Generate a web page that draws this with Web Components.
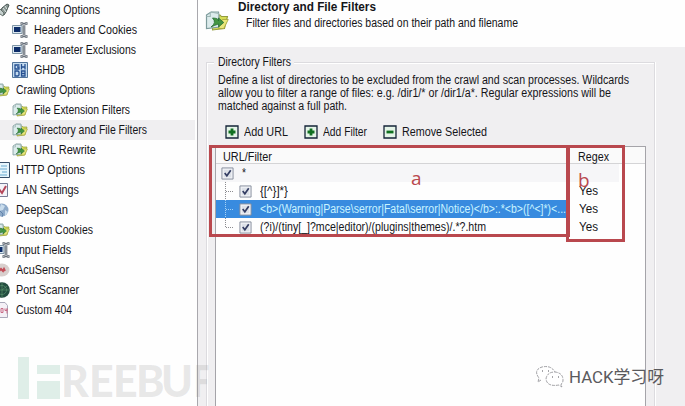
<!DOCTYPE html>
<html lang="en"><head><meta charset="utf-8"><title>Directory and File Filters</title>
<style>html,body{margin:0;width:685px;height:406px;overflow:hidden;background:#fff}</style></head>
<body><scan-settings></scan-settings>
<script>
const define=(name,html,setup)=>{
  const t=document.createElement('template');t.innerHTML=html;
  customElements.define(name,class extends HTMLElement{
    connectedCallback(){
      if(this.shadowRoot)return;
      this.attachShadow({mode:'open'}).append(t.content.cloneNode(true));
      if(setup)setup(this,this.shadowRoot);
    }
  });
};

// A single line of text, condensed horizontally to the width in "w".
define('fit-text','<style>:host{display:block;white-space:pre;height:1.2em;line-height:1.2;flex:none}span{display:inline-block;transform-origin:0 50%}</style><span><slot></slot></span>',(h,r)=>{
  const w=+h.getAttribute('w'),s=r.querySelector('span');
  h.style.width=w+'px';
  s.style.transform='scaleX('+w/s.getBoundingClientRect().width+')';
});

const icons={
  torch:'<path d="M8 6l5-4 2 1-3 7-2 3-4-3z" fill="#8b9794" stroke="#485653"/><path d="M9 6l3 4M11 4l2 3" stroke="#dce6e3"/><path d="M5 6l5 5-1 3-6-4z" fill="#c6d1cf" stroke="#66736f"/>',
  field:'<path d="M0.500 3.500h9.500v8H0.500z" fill="#dce8f0" stroke="#7f95a6"/><path d="M2 5h6.500v5H2z" fill="#0c2c68"/><path d="M8.500 1.500h1.500l2 1 2-1h1.500M8.500 14.500h1.500l2-1 2 1h1.500M12 2v12" fill="none" stroke="#58606b" stroke-width="2.600"/><path d="M12 2v12M9 1.500l3 1 3-1M9 14.500l3-1 3 1" fill="none" stroke="#b9bec3"/>',
  ghdb:'<path d="M.5.5h15v15H.5z" fill="#c5dcef" stroke="#51749b"/><path d="M7.500 3H3v4h4V5H5M9.500 2v5.500M13 2v5.500M9.500 5H13M3 9h3l1 1v3l-1 1H3zM9.500 9h3.500v5H9.500zM9.500 11.500H13" fill="none" stroke="#254f91" stroke-width="1.300"/>',
  folder:'<path d="M5 6l2-2h3l1 1h4l-2 8-8 1z" fill="#d6dc55" stroke="#929b3e" stroke-width=".7"/><path d="M1 4l3-2h5l1 10-9 1z" fill="#dcebec" stroke="#7d9b9c" stroke-width=".8"/><path d="M3.500 2v3H1M4 2l5 1v4" fill="none" stroke="#9db6b4" stroke-width=".7"/><path d="M9 13l2.500-6H15.500l-3 6z" fill="#e8e77b" stroke="#a9a83e" stroke-width=".6"/><path d="M5 6q4 0 4 2V6l3.500 3L9 12v-2Q6 11 4 12q4-3 1-6z" fill="#439543" stroke="#246b32" stroke-width=".5"/>',
  http:'<path d="M2 .5h13.500v15H2z" fill="#e6f5fc" stroke="#38506b"/><path d="M7 4h6M5 7h8M8 10h5M5 13h8" stroke="#69a9cf"/>',
  lan:'<path d="M2 1.500h11.500v13H2z" fill="#f4f3f8" stroke="#777c96"/><path d="M5 7l3 4 4-7" fill="none" stroke="#b54659" stroke-width="2"/>',
  deep:'<circle cx="8" cy="8" r="6.500" fill="#8eaac9"/><path d="M7 2l4 2-2 4-4 1zM11 8l3 2-3 4z" fill="#c9dcec"/><path d="M6 9l3 3-1 3" fill="none" stroke="#6183aa"/>',
  sensor:'<ellipse cx="8" cy="8" rx="7.500" ry="6.500" fill="#d8cfcd"/><path d="M5 9l2-2 2 2 1-2 1 2" fill="none" stroke="#c24c57" stroke-width="2"/>',
  port:'<circle cx="8" cy="8" r="7.800" fill="#244d40"/><circle cx="8" cy="8" r="4.500" fill="none" stroke="#4a8063"/><path d="M8 1v14M1 8h14M8 8l5-4" stroke="#59906b" stroke-width=".7"/>',
  custom:'<path d="M2 .5h9l2.500 3v12H2z" fill="#f4f0f6" stroke="#aaa9ba"/><path d="M7 6.500v4h2v-4zM11 6.500v2h2v-2M13 6.500v5" fill="none" stroke="#c86a85"/>',
  add:'<path d="M1 1h12v12H1z" fill="#e5f4e8" stroke="#152438" stroke-width="1.300"/><path d="M7 3.500v7M3.500 7h7" stroke="#107020" stroke-width="2.800"/>',
  remove:'<path d="M1 1h12v12H1z" fill="#e5f4e8" stroke="#152438" stroke-width="1.300"/><path d="M3.500 7h7" stroke="#107020" stroke-width="2.800"/>',
  check:'<path d="M1 1h12v12H1z" fill="#f0f2f6" stroke="#848b9a"/><path d="M3 3h8v8H3z" fill="#dde1e8"/><path d="M4 6.500l2.300 3L10.500 3.500" fill="none" stroke="#343d63" stroke-width="1.800"/>'
};
define('ui-icon','<style>:host{display:block;width:16px;height:16px;flex:none}svg{display:block;width:100%;height:100%}</style><svg></svg>',(h,r)=>{
  const n=h.getAttribute('name'),s=r.querySelector('svg');
  s.setAttribute('viewBox',/add|remove|check/.test(n)?'0 0 14 14':'0 0 16 16');s.innerHTML=icons[n];
});

define('nav-item','<style>:host{display:flex;height:20px;align-items:center;margin-left:-6px}:host([sub]){margin-left:0;padding-left:12px}:host([selected]){background:#f0eff1;margin-right:2px}fit-text{margin-left:6px}</style>',(h,r)=>{
  const i=document.createElement('ui-icon');i.setAttribute('name',h.getAttribute('icon'));
  const t=document.createElement('fit-text');t.setAttribute('w',h.getAttribute('w'));t.textContent=h.getAttribute('label');
  r.append(i,t);
});

define('nav-tree',`<style>:host{display:block;width:198px;box-sizing:border-box;background:#fefefe;border-right:1px solid #a9a8ad}</style>
<nav-item icon="torch" label="Scanning Options" w="84"></nav-item>
<nav-item sub icon="field" label="Headers and Cookies" w="103"></nav-item>
<nav-item sub icon="field" label="Parameter Exclusions" w="102"></nav-item>
<nav-item sub icon="ghdb" label="GHDB" w="31"></nav-item>
<nav-item icon="folder" label="Crawling Options" w="79"></nav-item>
<nav-item sub icon="folder" label="File Extension Filters" w="96"></nav-item>
<nav-item sub selected icon="folder" label="Directory and File Filters" w="113"></nav-item>
<nav-item sub icon="folder" label="URL Rewrite" w="62"></nav-item>
<nav-item icon="http" label="HTTP Options" w="69"></nav-item>
<nav-item icon="lan" label="LAN Settings" w="63"></nav-item>
<nav-item icon="deep" label="DeepScan" w="52"></nav-item>
<nav-item icon="folder" label="Custom Cookies" w="77"></nav-item>
<nav-item icon="field" label="Input Fields" w="55"></nav-item>
<nav-item icon="sensor" label="AcuSensor" w="53"></nav-item>
<nav-item icon="port" label="Port Scanner" w="63"></nav-item>
<nav-item icon="custom" label="Custom 404" w="56"></nav-item>`);

define('page-header',`<style>:host{display:flex;flex:none;height:47px;background:#fefefe;padding-left:7px;box-sizing:border-box}ui-icon{width:24px;height:24px;margin-top:9px}.t{padding-left:9px}.t fit-text:first-child{font-weight:bold}.t fit-text+fit-text{margin:2px 0 0 8px}</style>
<ui-icon name="folder"></ui-icon><div class="t"><fit-text w="138">Directory and File Filters</fit-text><fit-text w="272">Filter files and directories based on their path and filename</fit-text></div>`);

define('tool-bar',`<style>:host{display:flex;align-items:center;height:16px}ui-icon{width:14px;height:14px;margin-right:5px}</style>
<ui-icon name="add"></ui-icon><fit-text w="44" style="margin-right:16px">Add URL</fit-text><ui-icon name="add"></ui-icon><fit-text w="44" style="margin-right:16px">Add Filter</fit-text><ui-icon name="remove"></ui-icon><fit-text w="85">Remove Selected</fit-text>`);

define('filter-row',`<style>:host{display:grid;grid-template-columns:351px 1fr;height:18px}:host([root]){background:#f6f6f8;margin-right:26px}.c{display:flex;align-items:center;padding-left:5px;gap:8px;overflow:hidden}:host(:not([root])) .c{padding-left:0}:host([selected]) .c{background:#388bdf;color:#c8f3ff}.tree{width:17px;height:18px;flex:none;margin-right:-2px}:host([root]) .tree{display:none}ui-icon{width:13px;height:13px}.r{display:flex;align-items:center;padding-left:12px}
svg{display:block}path{fill:none;stroke:#8c8c90;stroke-dasharray:1 1}:host([selected]) path{stroke:#a5d2f5}</style>
<div class="c"><div class="tree"><svg width="18" height="18"><path d="M9.500 0V18M10 9.500H18"/></svg></div><ui-icon name="check"></ui-icon><slot></slot></div><div class="r"><slot name="regex"></slot></div>`,(h,r)=>{
  if(h.hasAttribute('last'))r.querySelector('path').setAttribute('d','M9.500 0V9M10 9.500H18');
});

define('filter-list',`<style>:host{display:block;height:261px;background:#fefefe;border:1px solid #a5a4a9;border-bottom:0;box-sizing:border-box}.h{display:grid;grid-template-columns:351px 1fr;height:17px;box-sizing:border-box;padding-top:3px;border-bottom:1px solid #d4d4d6;background:#fafafa}.h fit-text:first-child{margin-left:7px}.h fit-text+fit-text{margin-left:11px}</style>
<div class="h"><fit-text w="49">URL/Filter</fit-text><fit-text w="31">Regex</fit-text></div>
<filter-row root><fit-text w="4">*</fit-text></filter-row>
<filter-row><fit-text w="28">{[^}]*}</fit-text><fit-text slot="regex" w="19">Yes</fit-text></filter-row>
<filter-row selected><fit-text w="306">&lt;b&gt;(Warning|Parse\\serror|Fatal\\serror|Notice)&lt;/b&gt;:.*&lt;b&gt;([^&lt;]*)&lt;...</fit-text><fit-text slot="regex" w="19">Yes</fit-text></filter-row>
<filter-row last><fit-text w="226">(?i)/(tiny[_]?mce|editor)/(plugins|themes)/.*?.htm</fit-text><fit-text slot="regex" w="19">Yes</fit-text></filter-row>`);

define('group-box',`<style>:host{display:block;flex:1;min-height:0;margin:15px 30px 0 8px;border:1px solid #dcdbdf;border-bottom:0;box-shadow:inset 1px 1px #fff,1px 0 #fff;box-sizing:border-box;padding:0 8px 0 8px}.legend{display:flex;width:80px;height:14px;margin:-8px 0 0 -1px;padding-left:4px;box-sizing:border-box;background:#f0eff1}.p{padding:5px 0 0 3px}.p fit-text{height:13px;line-height:13px}tool-bar{margin:11px 0 6px 10px}</style>
<div class="legend"><fit-text w="73">Directory Filters</fit-text></div>
<div class="p"><fit-text w="411">Define a list of directories to be excluded from the crawl and scan processes. Wildcards</fit-text><fit-text w="393">allow you to filter a range of files: e.g. /dir1/* or /dir1/a*. Regular expressions will be</fit-text><fit-text w="129">matched against a full path.</fit-text></div>
<tool-bar></tool-bar><filter-list></filter-list>`);

define('note-layer',`<style>:host{position:absolute;inset:0;pointer-events:none}.box{position:absolute;border:3px solid #b9484e;box-sizing:border-box}.a{left:209px;top:145px;width:361px;height:92px}.b{left:566px;top:145px;width:59px;height:97px}.l{position:absolute;color:#b9484e;font:19px/20px "Open Sans",sans-serif}.w{position:absolute;left:18px;top:357px;overflow:visible}.chat{position:absolute;left:534px;top:364px}.name{position:absolute;left:569px;top:366px;font:17px/22px Roboto,"Noto Sans CJK SC",sans-serif;color:#5a5a5d}</style>
<div class="box a"></div><div class="box b"></div><span class="l" style="left:411px;top:168px">a</span><span class="l" style="left:578px;top:170px">b</span>
<svg class="w" width="200" height="49" font-family="Lato,sans-serif" font-weight="900" font-size="43" fill="#777" fill-opacity=".16"><path d="M0 0h11v42H0zM19 8h23v9H19zM19 24h23v18H19z" fill="#dfeee8" fill-opacity="1"/><text x="43 71 95 118 143" y="40">REEBU</text><text x="176" y="40" textLength="15" lengthAdjust="spacingAndGlyphs">F</text></svg>
<svg class="chat" width="32" height="26" fill="#fff" stroke="#88888d" stroke-width=".8" stroke-dasharray="3 1"><path d="M7 16l-3 2 1-4Q-1 6 8 3q9-2 13 5"/><path d="M25 21q-12 2-13-6 1-7 9-7 8 1 8 8 0 3-2 4l1 3z"/><path d="M8 7h1M14 7h1M18 13h1M24 13h1" stroke-width="1.500"/></svg>
<fit-text class="name" w="95">HACK学习呀</fit-text>`);

define('scan-settings',`<style>:host{display:flex;position:relative;width:685px;height:406px;overflow:hidden;background:#f0eff1;color:#151519;font:12px/1.2 "Liberation Sans",sans-serif}main{flex:1;display:flex;flex-direction:column}</style><nav-tree></nav-tree><main><page-header></page-header><group-box></group-box></main><note-layer></note-layer>`);
</script></body></html>
